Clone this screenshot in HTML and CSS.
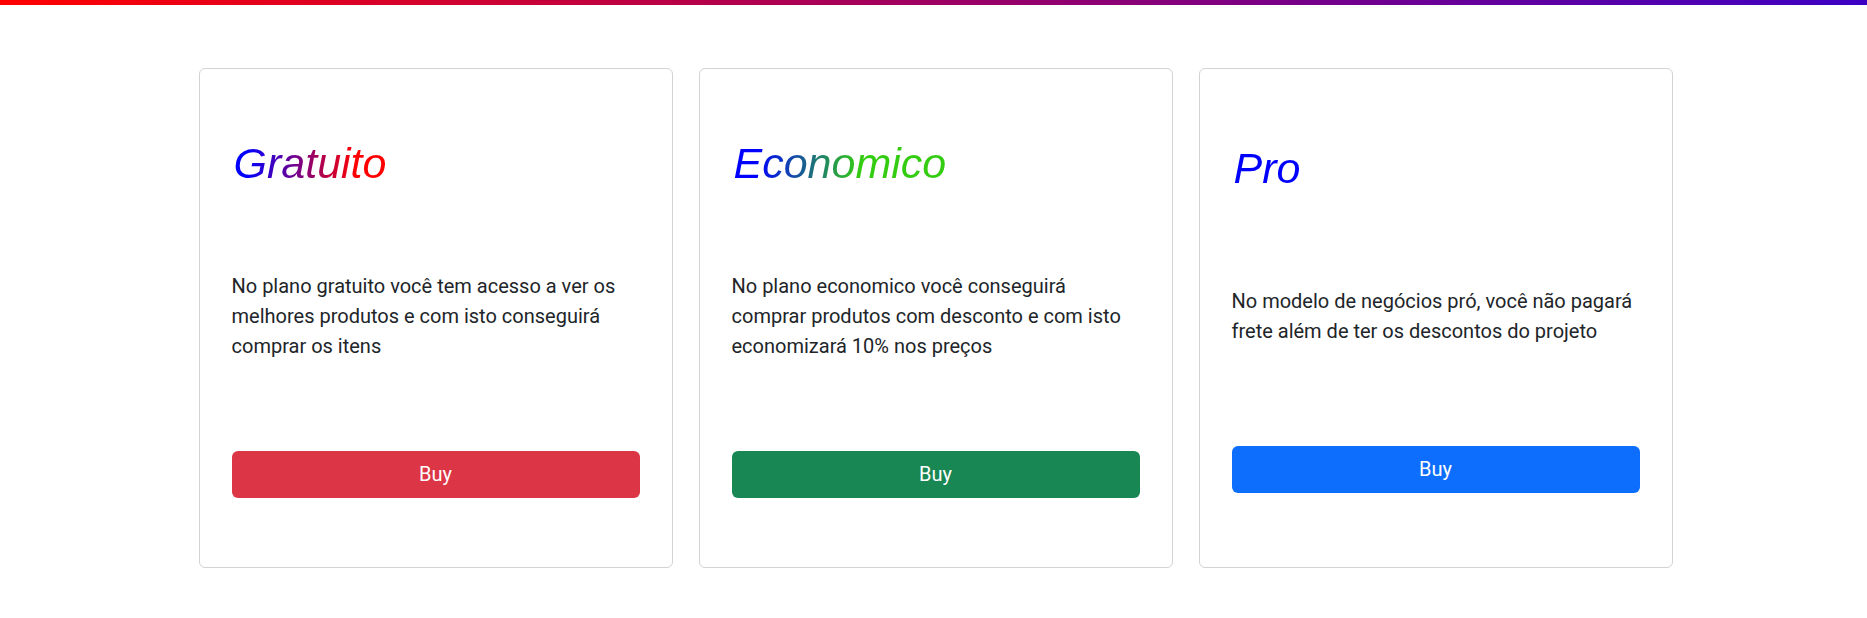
FILE: index.html
```html
<!DOCTYPE html>
<html lang="pt-BR">
<head>
<meta charset="utf-8">
<title>Planos</title>
<link rel="stylesheet" href="styles.css">
</head>
<body>
<div class="topbar"></div>
<main class="plans">
  <section class="card">
    <h1 class="title"><span class="grad grad-free">Gratuito</span></h1>
    <p class="desc">No plano gratuito você tem acesso a ver os melhores produtos e com isto conseguirá comprar os itens</p>
    <button class="btn btn-red">Buy</button>
  </section>
  <section class="card">
    <h1 class="title"><span class="grad grad-eco">Economico</span></h1>
    <p class="desc">No plano economico você conseguirá comprar produtos com desconto e com isto economizará 10% nos preços</p>
    <button class="btn btn-green">Buy</button>
  </section>
  <section class="card">
    <h1 class="title"><span class="grad grad-pro">Pro</span></h1>
    <p class="desc">No modelo de negócios pró, você não pagará frete além de ter os descontos do projeto</p>
    <button class="btn btn-blue">Buy</button>
  </section>
</main>
</body>
</html>
```
FILE: styles.css
```css
* { box-sizing: border-box; }
html, body { margin: 0; padding: 0; background: #fff; }
body {
  font-family: Roboto, "Liberation Sans", sans-serif;
  font-size: 20px;
  line-height: 1.5;
  color: #212529;
}
.topbar {
  height: 5px;
  background: linear-gradient(90deg, #ff0000 0%, #3c00c4 100%);
}
.plans {
  display: flex;
  justify-content: center;
  gap: 26px;
  margin-top: 63px;
  padding-left: 4px;
}
.card {
  width: 474px;
  height: 500px;
  border: 1px solid #d3d3d3;
  border-radius: 6px;
  padding: 32px;
  display: flex;
  flex-direction: column;
  justify-content: space-around;
}
.title {
  margin: 0 0 8px 2px;
  font-family: "Liberation Sans", Arial, sans-serif;
  font-style: italic;
  font-weight: 400;
  font-size: 43px;
  line-height: 1.17;
}
.grad {
  display: inline-block;
  -webkit-background-clip: text;
  background-clip: text;
  -webkit-text-fill-color: transparent;
  color: transparent;
  padding-right: 4px;
}
.grad-free { background-image: linear-gradient(90deg, #0000ff 8%, #ff0000 78%); }
.grad-eco { background-image: linear-gradient(90deg, #0000ff 10%, #33cc11 58%); }
.grad-pro { background-image: linear-gradient(90deg, #0000ff 0%, #0000ff 100%); }
.desc {
  margin: 0 0 16px 0;
}
.btn {
  display: block;
  width: 100%;
  height: 47px;
  border: 0;
  border-radius: 6px;
  font-family: Roboto, "Liberation Sans", sans-serif;
  font-size: 20px;
  line-height: 47px;
  color: #fff;
  padding: 0;
  text-align: center;
}
.btn-red { background: #dc3545; }
.btn-green { background: #198754; }
.btn-blue { background: #0d6efd; }
```
